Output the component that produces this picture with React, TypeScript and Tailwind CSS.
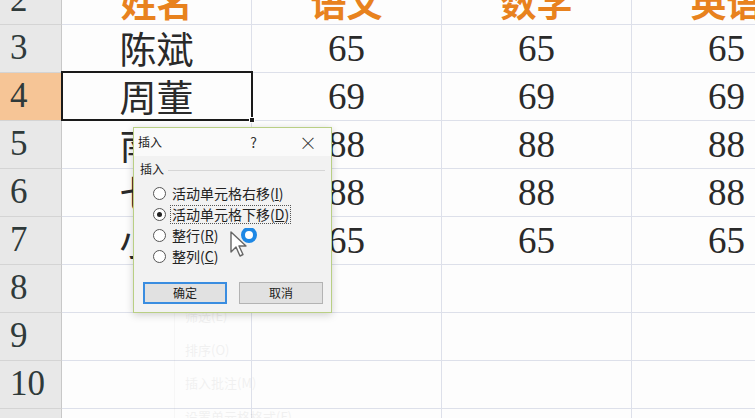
import React from 'react';

const cjk = '"Noto Sans CJK SC", "Noto Sans", sans-serif';
const serif = '"Liberation Serif", "Noto Sans CJK SC", serif';

type Row = { n: number; name: string; a: string; b: string; c: string; head?: boolean };

const rows: Row[] = [
  { n: 2, name: '姓名', a: '语文', b: '数学', c: '英语', head: true },
  { n: 3, name: '陈斌', a: '65', b: '65', c: '65' },
  { n: 4, name: '周董', a: '69', b: '69', c: '69' },
  { n: 5, name: '南宫', a: '88', b: '88', c: '88' },
  { n: 6, name: '七七', a: '88', b: '88', c: '88' },
  { n: 7, name: '小乐', a: '65', b: '65', c: '65' },
  { n: 8, name: '', a: '', b: '', c: '' },
  { n: 9, name: '', a: '', b: '', c: '' },
  { n: 10, name: '', a: '', b: '', c: '' },
  { n: 11, name: '', a: '', b: '', c: '' },
];

function Cell({ text, head, cjkText }: { text: string; head?: boolean; cjkText?: boolean }) {
  return (
    <div
      className={`w-[190px] shrink-0 h-full flex items-center justify-center border-r border-b border-[#dde0ea] ${
        head ? 'text-[#e8821e] font-bold text-[36px]' : 'text-[#2a2a2a] text-[37px]'
      }`}
      style={{ fontFamily: head || cjkText ? cjk : serif }}
    >
      {text}
    </div>
  );
}

function Radio({ label, hot, checked, focus }: { label: string; hot: string; checked?: boolean; focus?: boolean }) {
  return (
    <div className="flex items-center h-[21px] gap-[5px]">
      <span className="w-[13px] h-[13px] rounded-full border border-[#555] bg-white flex items-center justify-center">
        {checked && <span className="w-[5px] h-[5px] rounded-full bg-[#222]" />}
      </span>
      <span
        className={`text-[14px] leading-[17px] text-[#222] px-[1px] ${focus ? 'outline outline-1 outline-dotted outline-[#555]' : ''}`}
      >
        {label}(<span className="underline">{hot}</span>)
      </span>
    </div>
  );
}

export default function App() {
  return (
    <div className="relative w-[755px] h-[418px] overflow-hidden bg-[#fdfdfd]" style={{ fontFamily: cjk }}>
      {/* Sheet grid */}
      <div className="flex flex-col mt-[-23px]">
        {rows.map((r) => (
          <div key={r.n} className="flex h-[48px] shrink-0">
            <div
              className={`w-[62px] shrink-0 h-full flex items-center pl-[10px] border-r border-r-[#c8c8c8] border-b border-b-[#d4d4d4] text-[35px] text-[#2f3a3a] ${
                r.n === 4 ? 'bg-[#f6c596]' : 'bg-[#e8e8e8]'
              }`}
              style={{ fontFamily: serif }}
            >
              {r.n}
            </div>
            <Cell text={r.name} head={r.head} cjkText />
            <Cell text={r.a} head={r.head} />
            <Cell text={r.b} head={r.head} />
            <Cell text={r.c} head={r.head} />
          </div>
        ))}
      </div>

      {/* Active cell B4 */}
      <div className="absolute left-[61px] top-[71px] w-[192px] h-[50px] border-2 border-[#1a1a1a]" />
      <div className="absolute left-[249px] top-[117px] w-[6px] h-[6px] bg-[#1a1a1a] border border-white" />

      {/* Ghost context menu showing through */}
      <div className="absolute left-[147px] top-[24px] w-[293px] h-[400px] opacity-[0.06] text-[13px] text-[#333]">
        <div className="absolute left-0 top-[265px] w-[28px] h-[135px] border-r border-[#999]" />
        <div className="absolute left-[38px] top-[282px] flex flex-col gap-[14px]">
          <span>筛选(E)</span>
          <span>排序(O)</span>
          <span>插入批注(M)</span>
          <span>设置单元格格式(F)</span>
        </div>
      </div>

      {/* Insert dialog */}
      <div className="absolute left-[133px] top-[127px] w-[199px] h-[186px] border border-[#b9cf84] bg-[#f2f2f2] shadow-[0_2px_8px_rgba(0,0,0,0.18)] flex flex-col">
        <div className="h-[28px] flex items-center bg-[#fafafa] text-[12px] text-[#222] pl-[4px] pr-[14px]">
          <span>插入</span>
          <span className="ml-auto mr-[42px] text-[14px] text-[#333]">?</span>
          <span className="text-[18px] font-light text-[#333] leading-none">×</span>
        </div>
        <div className="px-[6px] pt-[4px] flex-1 flex flex-col">
          <div className="flex items-center gap-[4px] text-[12px] text-[#222]">
            <span>插入</span>
            <span className="flex-1 h-px bg-[#d6d6d6] mt-[2px]" />
          </div>
          <div className="pl-[13px] pt-[5px] flex flex-col">
            <Radio label="活动单元格右移" hot="I" />
            <Radio label="活动单元格下移" hot="D" checked focus />
            <Radio label="整行" hot="R" />
            <Radio label="整列" hot="C" />
          </div>
          <div className="mt-auto mb-[8px] flex gap-[12px] pl-[3px]">
            <button className="w-[84px] h-[22px] bg-[#e1e1e1] border-2 border-[#3a8de0] text-[12px] text-[#222]">
              确定
            </button>
            <button className="w-[84px] h-[22px] bg-[#e1e1e1] border border-[#b3b3b3] text-[12px] text-[#222]">
              取消
            </button>
          </div>
        </div>
      </div>

      {/* Mouse pointer with busy ring */}
      <svg className="absolute left-[229px] top-[228px]" width="32" height="32" viewBox="0 0 32 32">
        <path d="M2 4 L2 24 L7 19 L11 28 L14 26.5 L10 18 L17 18 Z" fill="#fff" stroke="#666" strokeWidth="1.4" strokeLinejoin="round" />
        <circle cx="20" cy="7" r="6" fill="#fff" stroke="#1e88e5" strokeWidth="4" />
      </svg>
    </div>
  );
}
